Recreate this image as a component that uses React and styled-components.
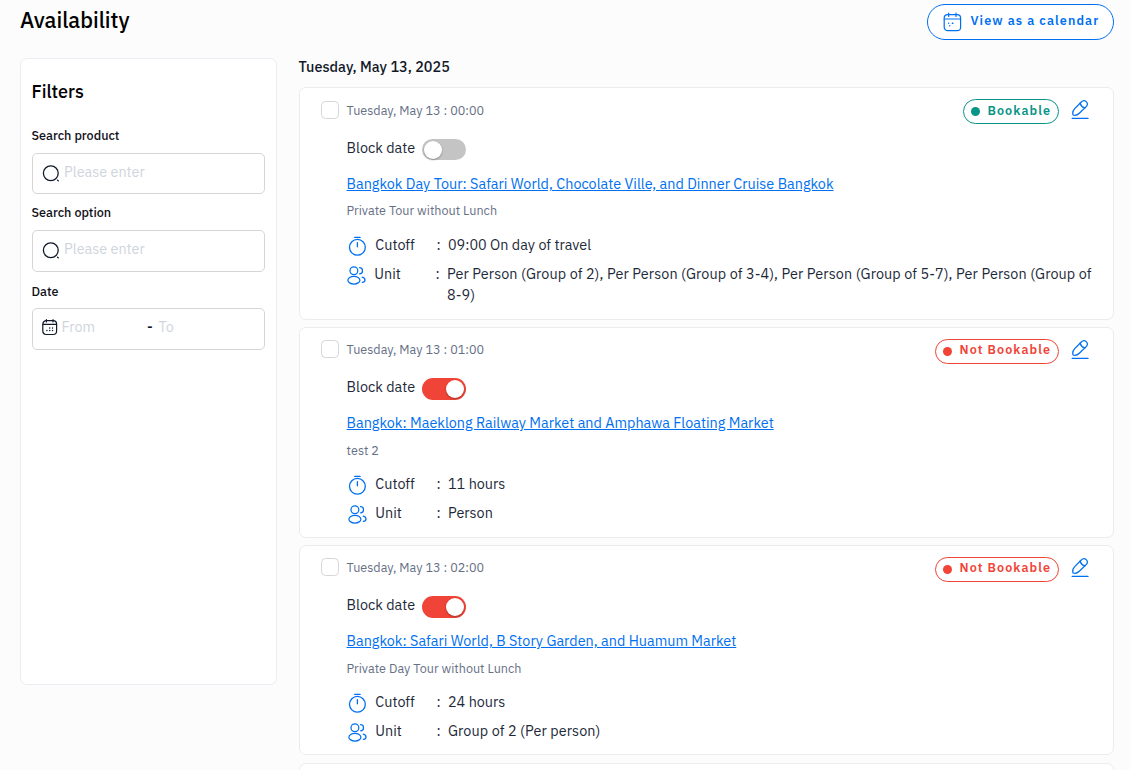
import React from "react";
import styled, { createGlobalStyle } from "styled-components";

const BLUE = "#0070f0";
const RED = "#f04438";
const GREEN = "#069586";

const GlobalStyle = createGlobalStyle`
  * { box-sizing: border-box; }
  html, body { margin: 0; height: 770px; overflow: hidden; }
  body {
    background: #fcfcfc;
    color: #1d2939;
    font-family: "IBM Plex Sans", Roboto, "Liberation Sans", sans-serif;
    font-size: 14.4px;
    line-height: 20px;
  }
`;

const Page = styled.div`
  height: 770px;
  overflow: hidden;
  padding: 4px 16px 0 20px;
`;

const TopBar = styled.header`
  display: flex;
  justify-content: space-between;
  align-items: flex-start;
  height: 54px;
`;

const Title = styled.h1`
  margin: 1px 0 0;
  font-size: 21.6px;
  line-height: 30px;
  font-weight: 500;
  color: #000;
`;

const CalendarButton = styled.button`
  display: flex;
  align-items: center;
  gap: 8.5px;
  width: 187px;
  height: 36px;
  padding: 0 0 0 15px;
  border: 1px solid ${BLUE};
  border-radius: 18px;
  background: #fff;
  color: ${BLUE};
  font: inherit;
  font-size: 12.6px;
  font-weight: 600;
  letter-spacing: 1.08px;
  white-space: nowrap;

  span { margin-bottom: 4px; }
`;

const Columns = styled.div`
  display: flex;
  align-items: flex-start;
  gap: 22px;
`;

const Sidebar = styled.aside`
  flex: none;
  width: 257px;
  height: 627px;
  padding: 20px 11px 0;
  border: 1px solid #ececf2;
  border-radius: 7px;
  background: #fff;
`;

const SidebarTitle = styled.h2`
  margin: 0 0 21px -0.5px;
  font-size: 18px;
  line-height: 26px;
  font-weight: 500;
  color: #000;
`;

const Label = styled.label`
  display: block;
  height: 18px;
  margin-left: -0.5px;
  line-height: 18px;
  font-size: 12.6px;
  font-weight: 500;
  color: #101018;
`;

const Field = styled.div`
  display: flex;
  align-items: center;
  width: 233px;
  height: ${(p) => p.$height}px;
  margin: ${(p) => p.$margin};
  padding: 0 0 4px 9px;
  border: 1px solid #d5d5d8;
  border-radius: 5px;
  color: #101828;

  svg { flex: none; margin-top: ${(p) => p.$iconTop}px; }
`;

const Placeholder = styled.span`
  width: ${(p) => p.$width || "auto"};
  margin-left: ${(p) => p.$left}px;
  color: #d0d5dd;
`;

const Dash = styled.span`
  width: 7px;
  font-weight: 500;
`;

const Results = styled.main`
  flex: none;
  width: 815px;
`;

const DayHeading = styled.h3`
  margin: 0 0 0 -0.5px;
  height: 29px;
  line-height: 18px;
  font-size: 14.4px;
  font-weight: 500;
  color: #101828;
`;

const Card = styled.article`
  display: flex;
  align-items: flex-start;
  justify-content: space-between;
  height: ${(p) => p.$height}px;
  margin-bottom: ${(p) => p.$gap}px;
  padding: 11px 24px 0 21px;
  border: 1px solid #ececee;
  border-radius: 7px;
  background: #fff;
`;

const Details = styled.div`
  display: grid;
  grid-template-columns: 18px 747px;
  column-gap: 7.6px;
  flex: none;
  width: 0;
  padding-top: ${(p) => p.$top}px;
`;

const Checkbox = styled.span`
  width: 18px;
  height: 18px;
  margin-top: 1px;
  border: 1px solid #d6d6d9;
  border-radius: 4.5px;
  background: #fff;
`;

const Muted = styled.div`
  height: 20px;
  color: #667085;
  font-size: 12.6px;
`;

const BlockRow = styled.div`
  display: flex;
  align-items: flex-start;
  height: 22px;
  margin-top: 18px;

  span { width: 75.4px; }
`;

const Toggle = styled.div`
  display: flex;
  justify-content: ${(p) => (p.$on ? "flex-end" : "flex-start")};
  width: 44px;
  height: ${(p) => (p.$on ? 22 : 21)}px;
  margin-top: 1px;
  padding: ${(p) => (p.$on ? 2 : 1.5)}px 2px;
  border-radius: 11px;
  background: ${(p) => (p.$on ? RED : "#c4c4c4")};

  &::after {
    content: "";
    width: 18px;
    height: 18px;
    border-radius: 50%;
    background: #fff;
    box-shadow: 0 1px 2px rgba(0, 0, 0, 0.3);
  }
`;

const ProductLink = styled.a`
  display: block;
  height: 20px;
  margin: 14px 0 ${(p) => p.$below}px;
  color: ${BLUE};
  text-decoration: underline;
  white-space: nowrap;
`;

const InfoRow = styled.dl`
  display: grid;
  grid-template-columns: 28.7px 61.2px 11.5px 1fr;
  margin: ${(p) => p.$top}px 0 0 ${(p) => (p.$nudge ? "-1px" : "0")};
  line-height: 21px;

  svg { margin: 2px 0 -2px 1.4px; }
`;

const Term = styled.dt``;

const Value = styled.dd`
  margin: 0;
  letter-spacing: ${(p) => p.$spacing || "normal"};
`;

const Actions = styled.div`
  display: flex;
  flex: none;
  gap: 12px;
  margin-left: auto;
`;

const Badge = styled.span`
  display: flex;
  align-items: center;
  gap: 7.5px;
  width: ${(p) => (p.$ok ? 96 : 124)}px;
  height: 25px;
  padding-left: 7px;
  border: 1px solid currentColor;
  border-radius: 13px;
  color: ${(p) => (p.$ok ? GREEN : RED)};
  font-size: 12.6px;
  font-weight: 600;
  letter-spacing: 1.08px;
  white-space: nowrap;

  &::before {
    content: "";
    flex: none;
    width: 9px;
    height: 9px;
    border-radius: 50%;
    background: currentColor;
  }

  b { font-weight: inherit; margin-bottom: ${(p) => (p.$ok ? 3 : 5)}px; }
`;

const SearchIcon = () => (
  <svg width="18" height="18" viewBox="0 0 18 18" fill="none" stroke="currentColor" strokeWidth="1.3" strokeLinecap="round">
    <circle cx="8.8" cy="8.3" r="7.4" />
    <path d="M15.6 15.2l.7.7" />
  </svg>
);

const CalendarIcon = () => (
  <svg width="16" height="17" viewBox="0 0 16 17" fill="none" stroke="currentColor" strokeWidth="1.2" strokeLinecap="round">
    <rect x="0.8" y="1.7" width="13.8" height="13.8" rx="3.5" />
    <path d="M0.8 5.3h13.8M4.4 0.7v2.2M11 0.7v2.2" />
    <path strokeWidth="1.5" d="M7.7 9h.01M10.5 9h.01M4.9 11.6h.01M7.7 11.6h.01M10.5 11.6h.01" />
  </svg>
);

const CalendarOutlineIcon = () => (
  <svg width="19" height="20" viewBox="0 0 19 20" fill="none" stroke="currentColor" strokeWidth="1.2" strokeLinecap="round">
    <rect x="1.2" y="2.7" width="16.4" height="16" rx="3.5" />
    <path d="M1.2 7h16.4M5.7 1v3.4M13 1v3.4" />
    <path strokeWidth="1.4" d="M5.6 11.2h.01M9.3 11.2h.6M6.7 13.8h.01" />
  </svg>
);

const TimerIcon = () => (
  <svg width="20" height="20" viewBox="0 0 20 20" fill="none" stroke={BLUE} strokeWidth="1.3" strokeLinecap="round">
    <circle cx="9.4" cy="11.3" r="7.9" />
    <path d="M9.4 6.6v4.2M6.7 1.4h5.4" />
  </svg>
);

const PeopleIcon = () => (
  <svg width="20" height="20" viewBox="0 0 20 20" fill="none" stroke={BLUE} strokeWidth="1.25" strokeLinecap="round">
    <circle cx="6.9" cy="5.8" r="3.9" />
    <ellipse cx="6.9" cy="15.2" rx="6" ry="3.8" />
    <path d="M12.6 2.7c1.6 0 2.9 1.2 2.9 3s-1.3 3.1-2.9 3.1" />
    <path d="M15.2 12.2c1.7.4 2.8 1.4 2.8 2.7 0 1.2-1 2.2-2.6 2.5" />
  </svg>
);

const EditIcon = () => (
  <svg width="18" height="21" viewBox="0 0 18 21" fill="none" stroke={BLUE} strokeWidth="1.3" strokeLinecap="round" strokeLinejoin="round">
    <path d="M10.3 3 3.7 9.6C2.3 11.1 1.5 14.2 2.1 16c1.8.6 4.7-.2 6.2-1.7l6.9-6.7c1.5-1.5 1.6-3.3.2-4.7s-3.6-1.4-5.1.1Z" />
    <path d="M9.1 4.2c.7 2.5 2.3 4 4.8 4.7M1.2 19.4h15.8" />
  </svg>
);

const slots = [
  {
    time: "00:00", ok: true, height: 233, gap: 7, top: 1, below: 6,
    product: "Bangkok Day Tour: Safari World, Chocolate Ville, and Dinner Cruise Bangkok",
    option: "Private Tour without Lunch",
    cutoff: "09:00 On day of travel",
    unit: "Per Person (Group of 2), Per Person (Group of 3-4), Per Person (Group of 5-7), Per Person (Group of 8-9)",
    unitSpacing: "0.078px",
  },
  {
    time: "01:00", height: 211, gap: 7, top: 0, below: 7,
    product: "Bangkok: Maeklong Railway Market and Amphawa Floating Market",
    option: "test 2",
    cutoff: "11 hours", unit: "Person",
  },
  {
    time: "02:00", height: 210, gap: 8, top: 0, below: 7,
    product: "Bangkok: Safari World, B Story Garden, and Huamum Market",
    option: "Private Day Tour without Lunch",
    cutoff: "24 hours", unit: "Group of 2 (Per person)", unitSpacing: "0.08px",
  },
];

function Slot({ slot }) {
  return (
    <Card $height={slot.height} $gap={slot.gap}>
      <Details $top={slot.top}>
        <Checkbox />
        <div>
          <Muted>Tuesday, May 13 : {slot.time}</Muted>
          <BlockRow>
            <span>Block date</span>
            <Toggle $on={!slot.ok} />
          </BlockRow>
          <ProductLink $below={slot.below}>{slot.product}</ProductLink>
          <Muted>{slot.option}</Muted>
          <InfoRow $top={20 - slot.below}>
            <TimerIcon />
            <Term>Cutoff</Term>
            <span>:</span>
            <Value>{slot.cutoff}</Value>
          </InfoRow>
          <InfoRow $top={8} $nudge={slot.ok}>
            <PeopleIcon />
            <Term>Unit</Term>
            <span>:</span>
            <Value $spacing={slot.unitSpacing}>{slot.unit}</Value>
          </InfoRow>
        </div>
      </Details>
      <Actions>
        <Badge $ok={slot.ok}><b>{slot.ok ? "Bookable" : "Not Bookable"}</b></Badge>
        <EditIcon />
      </Actions>
    </Card>
  );
}

export default function App() {
  return (
    <>
      <GlobalStyle />
      <Page>
        <TopBar>
          <Title>Availability</Title>
          <CalendarButton><CalendarOutlineIcon /><span>View as a calendar</span></CalendarButton>
        </TopBar>
        <Columns>
          <Sidebar>
            <SidebarTitle>Filters</SidebarTitle>
            <Label>Search product</Label>
            <Field $height={41} $margin="9px 0 9px" $iconTop={5}>
              <SearchIcon />
              <Placeholder $left={4}>Please enter</Placeholder>
            </Field>
            <Label>Search option</Label>
            <Field $height={42} $margin="9px 0 10px" $iconTop={4}>
              <SearchIcon />
              <Placeholder $left={4}>Please enter</Placeholder>
            </Field>
            <Label>Date</Label>
            <Field $height={42} $margin="8px 0 0" $iconTop={0}>
              <CalendarIcon />
              <Placeholder $left={3.5} $width="85.5px">From</Placeholder>
              <Dash>-</Dash>
              <Placeholder $left={4.5}>To</Placeholder>
            </Field>
          </Sidebar>
          <Results>
            <DayHeading>Tuesday, May 13, 2025</DayHeading>
            {slots.map((slot) => <Slot key={slot.time} slot={slot} />)}
            <Card $height={210} $gap={0} />
          </Results>
        </Columns>
      </Page>
    </>
  );
}
